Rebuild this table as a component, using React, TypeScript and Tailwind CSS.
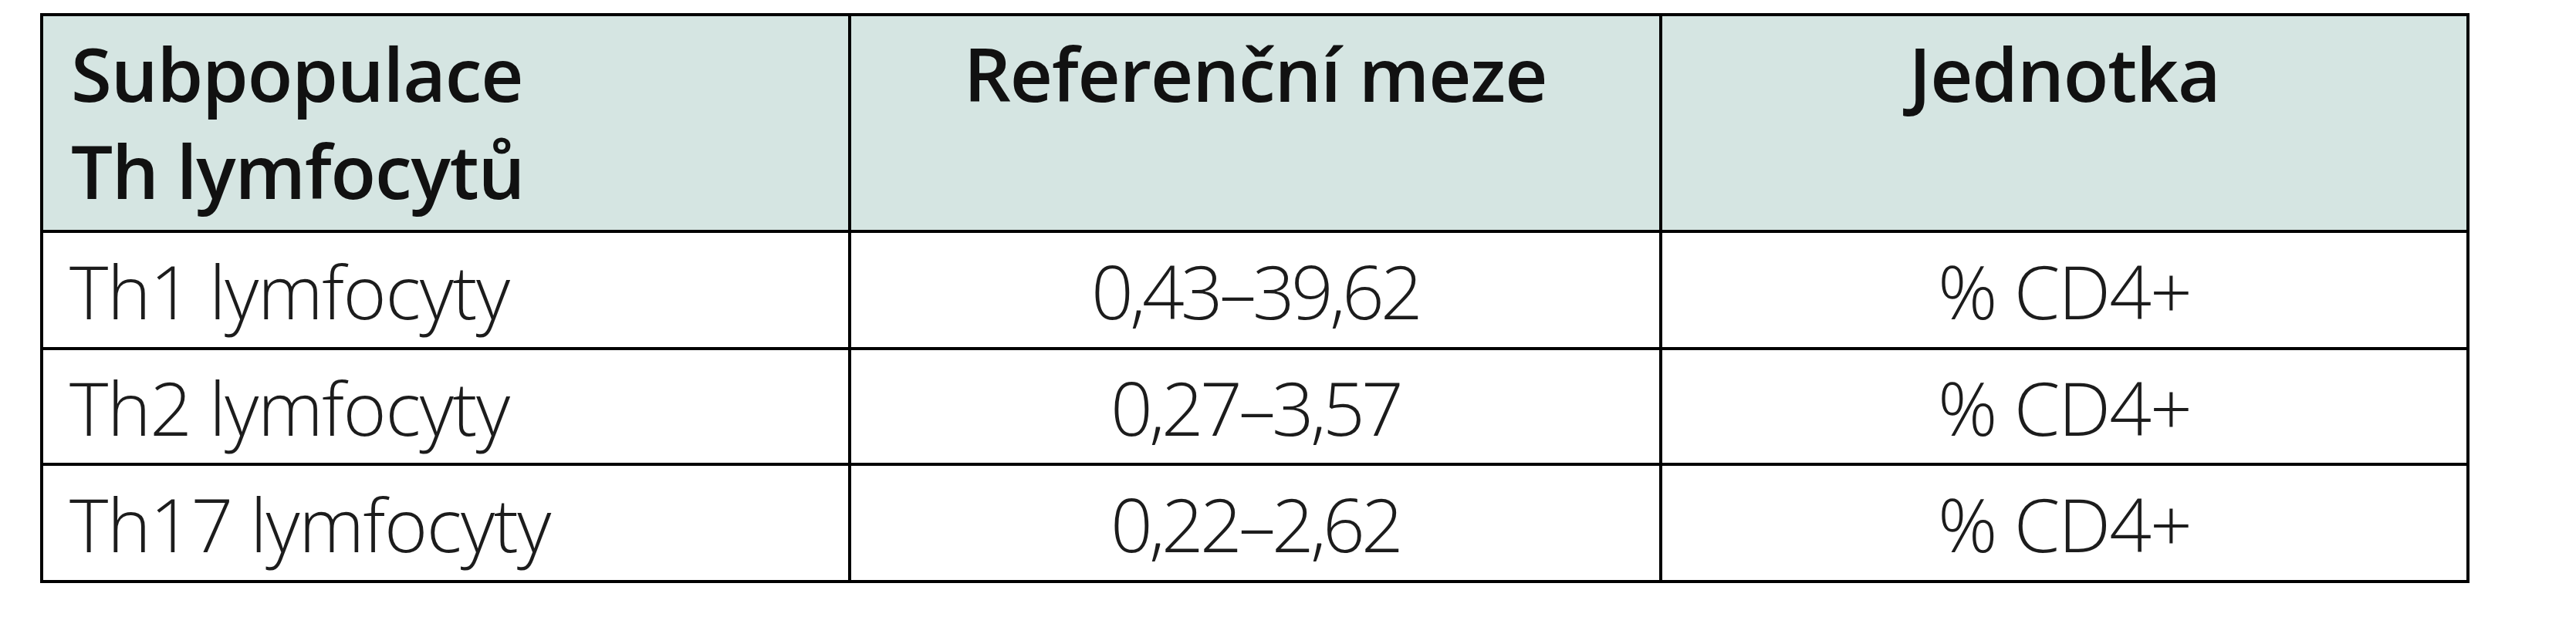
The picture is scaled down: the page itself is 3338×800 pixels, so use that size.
import React from 'react';

const rows = [
  { name: 'Th1 lymfocyty', range: '0,43–39,62', unit: '% CD4+', h: 'h-[152px] border-b-4' },
  { name: 'Th2 lymfocyty', range: '0,27–3,57', unit: '% CD4+', h: 'h-[150px] border-b-4' },
  { name: 'Th17 lymfocyty', range: '0,22–2,62', unit: '% CD4+', h: 'h-[148px]' },
];

const App = () => {
  return (
    <div className="min-h-[800px] w-[3338px] bg-white pt-[17px] pl-[52px] font-['Open_Sans','Noto_Sans',sans-serif]">
      <div className="w-[3148px] border-4 border-black">
        {/* header */}
        <div className="grid h-[281px] grid-cols-[1047px_1051px_1042px] border-b-4 border-black bg-[#d5e5e2] text-[96px] font-semibold leading-[126px] tracking-[-0.012em] text-[#111]">
          <div className="border-r-4 border-black pl-[36px] pt-[11px]">
            Subpopulace
            <br />
            Th lymfocytů
          </div>
          <div className="border-r-4 border-black pt-[11px] text-center">Referenční meze</div>
          <div className="pt-[11px] text-center">Jednotka</div>
        </div>

        {rows.map((r) => (
          <div
            key={r.name}
            className={`grid grid-cols-[1047px_1051px_1042px] border-black text-[96px] font-light leading-none text-[#1c1c1c] ${r.h}`}
          >
            <div className="flex items-center border-r-4 border-black pl-[34px] pt-[2px] tracking-[-0.015em]">{r.name}</div>
            <div className="flex items-center justify-center border-r-4 border-black pt-[2px] tracking-[-0.05em]">{r.range}</div>
            <div className="flex items-center justify-center pt-[2px] tracking-[-0.02em]">{r.unit}</div>
          </div>
        ))}
      </div>
    </div>
  );
};

export default App;
